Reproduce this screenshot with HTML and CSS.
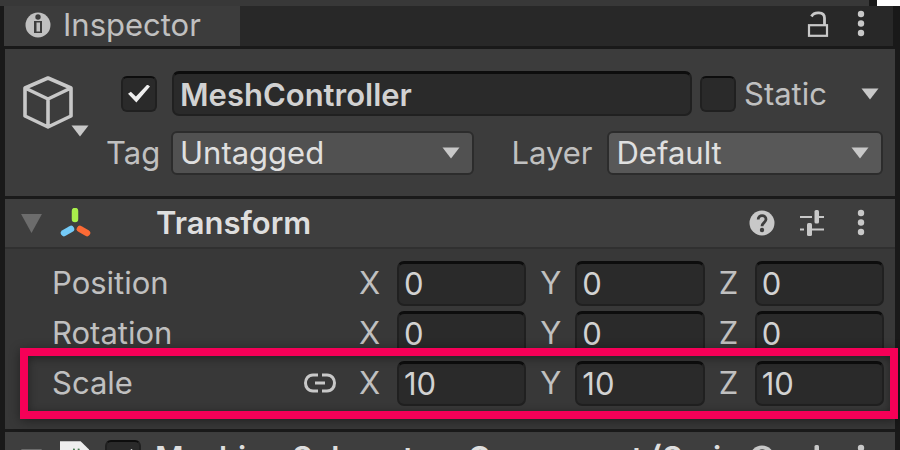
FILE: index.html
```html
<!DOCTYPE html>
<html lang="en">
<head>
<meta charset="utf-8">
<title>Inspector</title>
<link rel="stylesheet" href="styles.css">
</head>
<body>
<svg class="defs" aria-hidden="true">
  <symbol id="dots" viewBox="0 0 8 28"><circle cx="4" cy="4" r="3.2"/><circle cx="4" cy="13.5" r="3.2"/><circle cx="4" cy="23" r="3.2"/></symbol>
  <symbol id="help" viewBox="0 0 26 26"><circle cx="13" cy="13" r="12.5"/><path d="M9.2 9.6C9.2 4.2 17 4.4 17 9.3c0 3.3-4 3.4-4 7" fill="none" stroke="#3e3e3e" stroke-width="2.8"/><circle cx="13" cy="20" r="2.2" fill="#3e3e3e"/></symbol>
  <symbol id="sliders" viewBox="0 0 26 26"><path d="M1 7h12M19 7h6M1 19.500h4M12 19.500h13" fill="none" stroke="currentColor" stroke-width="2"/><rect x="15.500" y="0" width="4.500" height="13.500" rx="1.500"/><rect x="8" y="13" width="5" height="13" rx="1.500"/></symbol>
  <symbol id="down" viewBox="0 0 18 12"><path d="M.5 .5h17L9 11.500z"/></symbol>
</svg>
<div class="window">
  <div class="upper"><span class="upper-edge"></span><span class="upper-page"></span></div>
  <header class="tabs">
    <button class="tab" type="button">
      <svg class="i26" viewBox="0 0 26 26"><circle cx="13" cy="13" r="12.5"/><circle cx="13" cy="5" r="2.700" fill="#3c3c3c"/><path d="M9 9h8v12H9z" fill="#3c3c3c"/><path d="M11.500 10.500h3.500v9h-3.500z"/></svg>
      Inspector
    </button>
    <div class="tab-tools">
      <button class="icon" type="button" aria-label="Lock"><svg class="i26 outline" viewBox="0 0 26 26"><rect x="4" y="14.200" width="18" height="10.600" stroke-width="2.200"/><path d="M6.500 5.500C9 .5 19.500 .5 19.500 7V14" stroke-width="2.800"/></svg></button>
      <button class="icon" type="button" aria-label="Menu"><svg class="dots"><use href="#dots"/></svg></button>
    </div>
  </header>
  <main class="panel">
    <section class="object">
      <button class="icon cube" type="button" aria-label="Object icon">
        <svg class="cube-box outline" viewBox="0 0 50 54"><path d="M25 3 48 13v28L25 52 2 41V13zM2 13l23 11 23-11M25 24v28" stroke-width="3.600" stroke-linejoin="round"/></svg>
        <svg class="down cube-arrow"><use href="#down"/></svg>
      </button>
      <div class="object-fields">
        <div class="line">
          <input class="check active" type="checkbox" checked aria-label="Active">
          <input class="field name" type="text" value="MeshController" aria-label="Name">
          <input class="check" type="checkbox" id="static"><label class="static" for="static">Static</label>
          <button class="icon" type="button" aria-label="Static options"><svg class="down"><use href="#down"/></svg></button>
        </div>
        <div class="line picks">
          <label class="tag" for="tag">Tag</label>
          <div class="pick"><select id="tag"><option>Untagged</option></select><svg class="down"><use href="#down"/></svg></div>
          <label class="layer" for="layer">Layer</label>
          <div class="pick light"><select id="layer"><option>Default</option></select><svg class="down"><use href="#down"/></svg></div>
        </div>
      </div>
    </section>
    <section class="component">
      <div class="component-head">
        <svg class="fold" viewBox="0 0 22 20"><path d="M0 0h22L11 20z"/></svg>
        <svg class="axes outline" viewBox="0 0 32 30" stroke-width="6.500" stroke-linecap="round"><path d="M16 3v8" stroke="#a9f04b"/><path d="m12 21-7 4" stroke="#74cbf8"/><path d="m21 21 7 4" stroke="#fc6a35"/></svg>
        <h2>Transform</h2>
        <div class="tools">
          <button class="icon" type="button" aria-label="Help"><svg class="i26"><use href="#help"/></svg></button>
          <button class="icon" type="button" aria-label="Presets"><svg class="i26"><use href="#sliders"/></svg></button>
          <button class="icon" type="button" aria-label="Menu"><svg class="dots"><use href="#dots"/></svg></button>
        </div>
      </div>
      <div class="rows">
        <div class="row"><span>Position</span><span></span>
          <label for="px">X</label><input class="field" id="px" value="0"><label for="py">Y</label><input class="field" id="py" value="0"><label for="pz">Z</label><input class="field" id="pz" value="0"></div>
        <div class="row"><span>Rotation</span><span></span>
          <label for="rx">X</label><input class="field" id="rx" value="0"><label for="ry">Y</label><input class="field" id="ry" value="0"><label for="rz">Z</label><input class="field" id="rz" value="0"></div>
        <div class="row scale"><span>Scale</span>
          <button class="icon" type="button" aria-label="Link scale"><svg class="link outline" viewBox="0 0 32 20" stroke-width="3"><path d="M14 2H9C-1 2-1 18 9 18h5M18 2h5c10 0 10 16 0 16h-5M11 10h10"/></svg></button>
          <label for="sx">X</label><input class="field" id="sx" value="10"><label for="sy">Y</label><input class="field" id="sy" value="10"><label for="sz">Z</label><input class="field" id="sz" value="10">
          <div class="highlight"></div></div>
      </div>
    </section>
    <section class="component next">
      <div class="component-head">
        <svg class="fold" viewBox="0 0 22 20"><path d="M0 0h22L11 20z"/></svg>
        <svg class="script" viewBox="0 0 32 36"><path d="M0 0h22l9 9v27H0z" fill="#eee"/><path d="M15 8l-2 18M20 8l-2 18M9 13h14M8 20h14" stroke="#477b50" stroke-width="2"/></svg>
        <input class="check" type="checkbox" checked aria-label="Component enabled">
        <h2>Meshing Subsystem Component (Scri</h2>
        <div class="tools">
          <button class="icon" type="button" aria-label="Help"><svg class="i26"><use href="#help"/></svg></button>
          <button class="icon" type="button" aria-label="Presets"><svg class="i26"><use href="#sliders"/></svg></button>
          <button class="icon" type="button" aria-label="Menu"><svg class="dots"><use href="#dots"/></svg></button>
        </div>
      </div>
    </section>
  </main>
</div>
</body>
</html>
```
FILE: styles.css
```css
* { box-sizing: border-box; }
body { margin: 0; height: 100vh; overflow: hidden; background: #191919; color: #c0c0c0; font: 31px/36px Inter, "Liberation Sans", sans-serif; }
.window { height: 100vh; overflow: hidden; }
button, input, select { font: inherit; color: inherit; }
svg { display: block; fill: currentColor; flex: none; }
.outline { fill: none; stroke: currentColor; }
.defs { position: absolute; width: 0; height: 0; }
.icon { padding: 0; border: 0; background: none; color: #c8c8c8; display: flex; justify-content: center; }
.i26 { width: 26px; height: 26px; }
.dots { width: 8px; height: 28px; }
.down { width: 18px; height: 12px; }

.upper { display: flex; height: 6px; background: #383838; }
.upper-edge { width: 8px; margin-left: auto; background: #191919; }
.upper-page { width: 23px; background: #fff; }
.tabs { display: flex; justify-content: space-between; height: 40px; margin: 0 7px 0 4px; background: #282828; }
.tab { display: flex; align-items: center; gap: 12px; width: 236px; padding: 0 0 2px 21px; border: 0; background: #3c3c3c; }
.tab-tools { display: flex; align-items: center; gap: 26px; padding: 0 28px 4px 0; }

.panel { margin: 3px 5px 0; }
.object { display: flex; height: 147px; padding: 22px 12px 0 18px; background: #3c3c3c; }
.cube { position: relative; width: 50px; height: 54px; margin-top: 4px; }
.cube-box { width: 50px; height: 54px; }
.cube-arrow { position: absolute; left: 48px; top: 50px; }
.object-fields { flex: 1; padding-left: 48px; }
.line { display: flex; align-items: center; }
.field { min-width: 0; width: 100%; height: 45px; padding: 0 5px; border: 2px solid #202020; border-top: 3px solid #0d0d0d; border-radius: 7px; background: #2a2a2a; color: #d2d2d2; }
.name { flex: 1; margin: 0 8px 0 15px; padding: 0 6px; font-weight: 600; }
.check { appearance: none; flex: none; width: 36px; height: 36px; margin: 0; border: 2px solid #202020; border-top-color: #0d0d0d; border-radius: 6px; background: #2a2a2a; display: grid; place-items: center; }
.check:checked::before { content: ""; width: 22px; height: 18px; background: #eee; clip-path: polygon(0 52%, 13% 40%, 36% 67%, 88% 0, 100% 11%, 38% 100%); }
.static { flex: none; width: 125px; padding-left: 8px; }
.line:first-child { padding-right: 4px; }
.picks { margin-top: 15px; margin-left: -15px; }
.tag { width: 65px; }
.layer { width: 96px; margin-left: 37px; }
.pick { position: relative; flex: 304; min-width: 0; }
.pick.light { flex: 276; }
.pick select { appearance: none; display: block; width: 100%; height: 44px; padding: 0 7px; border: 2px solid #2c2c2c; border-radius: 6px; background: #515151; color: #e0e0e0; }
.pick.light select { background: #585858; }
.pick .down { position: absolute; right: 14px; top: 16px; pointer-events: none; color: #c8c8c8; }

.component { border-top: 3px solid #1a1a1a; background: #383838; }
.component-head { display: flex; align-items: center; height: 50px; padding: 0 30px 0 16px; background: #3e3e3e; border-bottom: 2px solid #303030; }
.fold { width: 21px; height: 19px; color: #6c6c6c; }
.axes { width: 32px; height: 30px; margin-left: 17px; }
h2 { flex: 1; margin: 0 0 0 65px; font-size: 31px; line-height: 36px; font-weight: 600; color: #dedede; white-space: nowrap; overflow: hidden; }
.tools { display: flex; align-items: center; gap: 24px; }
.tools .icon:last-child { margin-left: 8px; }
.rows { padding: 9px 11px 21px 47px; }
.row { position: relative; display: grid; grid-template-columns: 252px 55px 38px 1fr 49px 1fr 50px 1fr; align-items: center; height: 50px; }
.row label ~ label { padding-left: 14px; }
.row .icon { justify-content: flex-start; }
.link { width: 32px; height: 20px; }
.highlight { position: absolute; inset: -10px -14px -11px -32px; border: 8px solid #f50057; box-shadow: 0 2px 10px #0006, inset 0 2px 10px #0006; pointer-events: none; }
.next .component-head { height: 52px; padding-top: 2px; }
.next .script { width: 30px; height: 34px; margin-left: 18px; }
.next .check { margin-left: 15px; }
.next h2 { margin-left: 14px; }
```
